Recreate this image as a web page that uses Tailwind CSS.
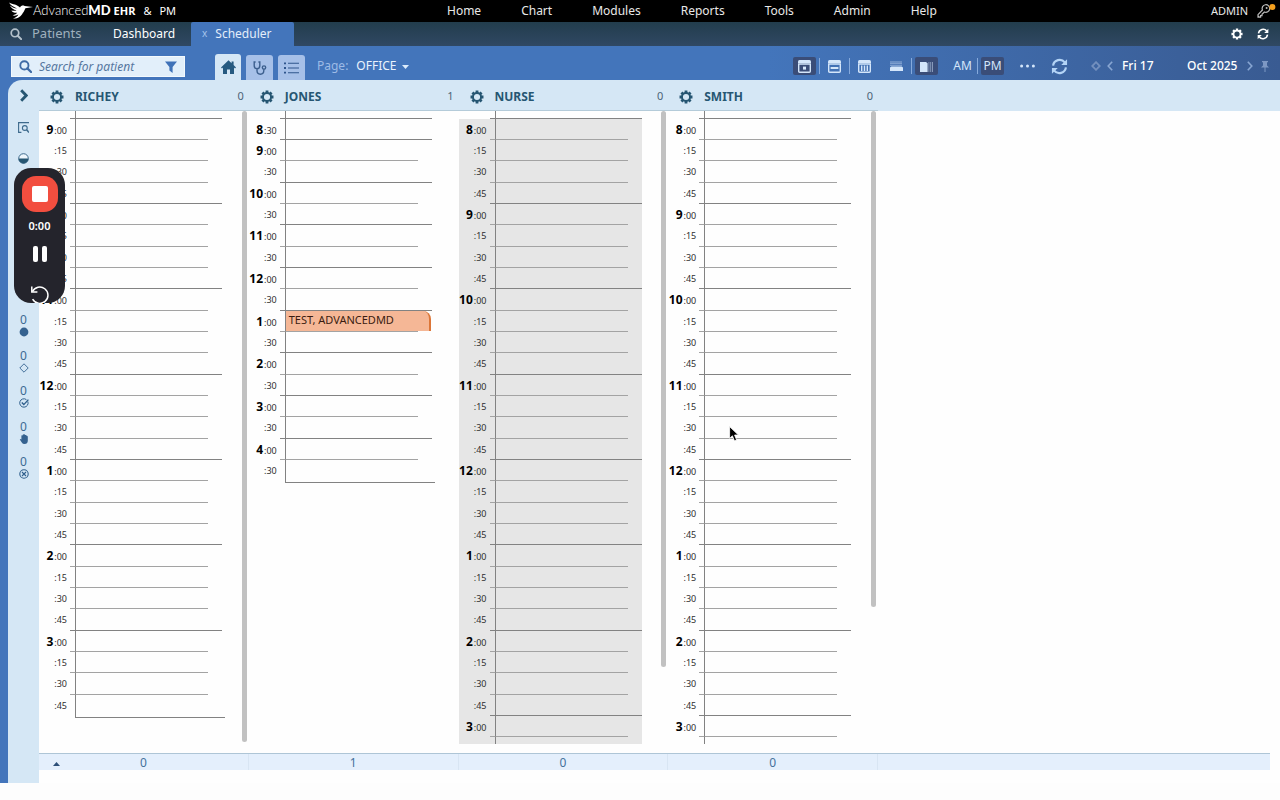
<!DOCTYPE html>
<html lang="en">
<head>
  <meta charset="UTF-8">
  <meta name="viewport" content="width=device-width, initial-scale=1.0">
  <title>Scheduler | AdvancedMD</title>
  <script src="https://cdn.jsdelivr.net/npm/@tailwindcss/browser@4"></script>
</head>
<body class="h-screen flex flex-col overflow-hidden bg-[#fdfdfd] font-['Noto_Sans','Open_Sans',sans-serif] text-xs">

  <!-- Shared icons -->
  <svg class="hidden">
    <symbol id="gear" viewBox="0 0 16 16">
      <g stroke="currentColor" stroke-width="3.2">
        <path d="M8 0.6V3.4M8 12.6v2.8M0.6 8h2.8M12.6 8h2.8M2.8 2.8l2 2M11.2 11.2l2 2M13.2 2.8l-2 2M4.8 11.2l-2 2"/>
      </g>
      <circle cx="8" cy="8" r="4.6" fill="none" stroke="currentColor" stroke-width="2.2"/>
    </symbol>
    <symbol id="refresh" viewBox="0 0 18 18">
      <path d="M2.2 8A7 7 0 0 1 14.6 4.6M15.8 10A7 7 0 0 1 3.4 13.4" fill="none" stroke="currentColor" stroke-width="2.3"/>
      <path d="M17 1.2V7.4H10.8ZM1 16.8V10.6H7.2Z" fill="currentColor"/>
    </symbol>
    <symbol id="search" viewBox="0 0 14 14">
      <circle cx="5.8" cy="5.8" r="4.4" fill="none" stroke="currentColor" stroke-width="2"/>
      <path d="M9 9l4 4" stroke="currentColor" stroke-width="2.4" stroke-linecap="round"/>
    </symbol>
  </svg>

  <!-- Top menu -->
  <header class="relative h-[22px] shrink-0 bg-black text-[#e8e8e8] flex items-center">
    <div class="w-[447px] flex items-center pl-[9px] text-white">
      <svg class="w-6 h-[17px]" viewBox="0 0 24 17" fill="#fff">
        <path d="M0 0.5C4 2.6 8 2.2 11 5.6C12 3.6 14 3.2 15.6 4L24 5L16.4 6.2C15.6 8 15 9.4 13.8 11C12 14.4 9 16.8 4 16.6C7 15.6 8.6 14.4 9.4 12.6C7.6 13.8 5 14 3.6 13.2C6 12.8 7.6 12 8.2 10.8C5.6 11 3 9.8 2.4 8.4C4.6 9 6.4 9 7.6 8.4C4.6 7.6 1.6 5.6 1 3.4C3.2 5.4 5.8 6.2 8 6.4C5 4.8 1.4 3.6 0 0.5Z"/>
      </svg>
      <span class="font-['Lato','Open_Sans',sans-serif] text-[13px]"><span class="font-light">Advanced</span><span class="font-black">MD</span></span>
      <span class="ml-[3px] text-[11px] font-bold">EHR</span>
      <span class="ml-2 text-[11px]">&amp;</span>
      <span class="ml-2 text-[11px]">PM</span>
    </div>
    <nav class="flex gap-10">
      <a href="#">Home</a>
      <a href="#">Chart</a>
      <a href="#">Modules</a>
      <a href="#">Reports</a>
      <a href="#">Tools</a>
      <a href="#">Admin</a>
      <a href="#">Help</a>
    </nav>
    <div class="ml-auto pr-1 flex items-center gap-2">
      <span class="text-[11px]">ADMIN</span>
      <svg class="w-5 h-4" viewBox="0 0 20 16" fill="none">
        <path d="M3 13.6L2 12.6V14.2H4.6V12.6H6V11.2L8.4 9A3.8 3.8 0 1 0 6.4 7L1.8 11.8" stroke="#bbb" stroke-width="1.2"/>
        <circle cx="10.6" cy="5" r="1" fill="#bbb"/>
        <circle cx="16.4" cy="4" r="3" fill="#f5a01e"/>
      </svg>
    </div>
  </header>

  <!-- Tabs -->
  <div class="h-6 shrink-0 bg-linear-to-b from-[#223d4d] to-[#304863] flex items-stretch">
    <a href="#" class="w-[113px] pl-[10px] flex items-center gap-[10px] text-[#9fb0be] text-[13px]">
      <svg class="w-3 h-3 text-[#b4c1cb]"><use href="#search"/></svg>Patients
    </a>
    <a href="#" class="w-[78px] flex items-center text-white">Dashboard</a>
    <a href="#" class="px-[11px] w-[103px] flex items-center gap-2 bg-[#4375bb] text-[#e4eefa] rounded-t-xs">
      <span class="text-[10px] text-[#a5c4ec]">x</span>Scheduler
    </a>
    <div class="ml-auto pr-[11px] flex items-center gap-[14px] text-white">
      <button type="button" aria-label="Settings"><svg class="block w-3 h-3"><use href="#gear"/></svg></button>
      <button type="button" aria-label="Reload"><svg class="block w-3 h-3"><use href="#refresh"/></svg></button>
    </div>
  </div>

  <div class="flex-1 min-h-0 mb-[17px] flex flex-col bg-linear-to-r from-[#4375bb] from-60% to-[#395b92] pl-2">

    <!-- Toolbar -->
    <div class="h-[34px] shrink-0 flex items-end">
      <div class="ml-[3px] mb-[3px] w-[174px] h-[21px] px-[7px] flex items-center gap-[7px] bg-[#e2effa] border border-white/60">
        <svg class="w-[13px] h-[13px] shrink-0 text-[#3f6aa5]"><use href="#search"/></svg>
        <input type="text" aria-label="Search for patient" placeholder="Search for patient" class="min-w-0 flex-1 italic outline-none placeholder:text-[#56779f]">
        <svg class="w-3 h-3 shrink-0" viewBox="0 0 12 12" fill="#3f72b8"><path d="M0 0.5H12L7.6 6V12L4.4 9.6V6Z"/></svg>
      </div>
      <div class="ml-[30px] flex items-end gap-[5px]">
        <button type="button" aria-label="Home page" class="w-[26px] h-[26px] rounded-t-[3px] bg-[#d5e7f5] flex items-center justify-center">
          <svg class="w-[15px] h-[14px]" viewBox="0 0 15 14" fill="#265a80"><path d="M7.5 0.3L10.6 3.2V1.4H12.6V5.1L15 7.4L14 8.4L13 7.6V14H9V9.4H6V14H2V7.6L1 8.4L0 7.4Z"/></svg>
        </button>
        <button type="button" aria-label="Clinical" class="w-[27px] h-[25px] rounded-t-[3px] bg-[#a6c0e8] flex items-center justify-center">
          <svg class="w-[14px] h-[14px]" viewBox="0 0 14 14" fill="none" stroke="#3c5f8e" stroke-width="1.4"><path d="M2.6 1H1.2V4.4C1.2 6.6 2.4 7.6 4 7.6S6.8 6.6 6.8 4.4V1H5.4M4 7.6V9.6C4 12 5.2 13.2 7.4 13.2S10.8 12 10.8 9.6V8.6"/><circle cx="11" cy="6.6" r="1.7"/></svg>
        </button>
        <button type="button" aria-label="List" class="w-[27px] h-[25px] rounded-t-[3px] bg-[#a6c0e8] flex items-center justify-center">
          <svg class="w-[15px] h-3" viewBox="0 0 15 12" fill="#2f558c"><path d="M0 0.4H2V2.2H0ZM0 5.1H2V6.9H0ZM0 9.8H2V11.6H0ZM4 0.8H15V1.8H4ZM4 5.5H15V6.5H4ZM4 10.2H15V11.2H4Z"/></svg>
        </button>
      </div>
      <div class="ml-3 h-7 flex items-center gap-2">
        <label for="page" class="text-[#9dbbe6]">Page:</label>
        <div class="relative">
          <select id="page" class="appearance-none w-[54px] text-[#eaf3fd] outline-none"><option>OFFICE</option></select>
          <svg class="absolute right-px top-[7px] w-[7px] h-1 pointer-events-none" viewBox="0 0 7 4" fill="#dcebfb"><path d="M0 0H7L3.5 4Z"/></svg>
        </div>
      </div>

      <div class="ml-auto pr-[11px] h-7 flex items-center text-[#d4e6fa]">
        <button type="button" aria-label="Day view" class="w-[23px] h-[18px] rounded-xs bg-[#3a4d78] flex items-center justify-center">
          <svg class="w-[13px] h-[13px]" viewBox="0 0 13 13"><path d="M1.5 0H11.5Q13 0 13 1.5V3H0V1.5Q0 0 1.5 0Z" fill="currentColor"/><path d="M0.7 4H12.3V11.3Q12.3 12.3 11.3 12.3H1.7Q0.7 12.3 0.7 11.3Z" fill="none" stroke="currentColor" stroke-width="1.4"/><path d="M5 6.6H8V9.6H5Z" fill="currentColor"/></svg>
        </button>
        <span class="mx-[3px] w-px h-4 bg-[#86aadc]"></span>
        <button type="button" aria-label="Week view" class="w-[23px] h-[18px] flex items-center justify-center">
          <svg class="w-[13px] h-[13px]" viewBox="0 0 13 13"><path d="M1.5 0H11.5Q13 0 13 1.5V3H0V1.5Q0 0 1.5 0Z" fill="currentColor"/><path d="M0.7 4H12.3V11.3Q12.3 12.3 11.3 12.3H1.7Q0.7 12.3 0.7 11.3Z" fill="none" stroke="currentColor" stroke-width="1.4"/><path d="M2.6 7H10.4V9H2.6Z" fill="currentColor"/></svg>
        </button>
        <span class="mx-[3px] w-px h-4 bg-[#86aadc]"></span>
        <button type="button" aria-label="Month view" class="w-[23px] h-[18px] flex items-center justify-center">
          <svg class="w-[13px] h-[13px]" viewBox="0 0 13 13"><path d="M1.5 0H11.5Q13 0 13 1.5V3H0V1.5Q0 0 1.5 0Z" fill="currentColor"/><path d="M0.7 4H12.3V11.3Q12.3 12.3 11.3 12.3H1.7Q0.7 12.3 0.7 11.3Z" fill="none" stroke="currentColor" stroke-width="1.4"/><path d="M3 5.4H4.4V11H3ZM5.8 5.4H7.2V11H5.8ZM8.6 5.4H10V11H8.6Z" fill="currentColor"/></svg>
        </button>
        <button type="button" aria-label="Stacked rows" class="ml-[9px] w-[23px] h-[18px] flex items-center justify-center">
          <svg class="w-[13px] h-[11px]" viewBox="0 0 13 11" fill="currentColor"><path d="M0 6.4L1.4 5.6H11.6L13 6.4V10H0Z"/><path d="M0 0.5H12V1.5H0ZM0 2.2H12V3.2H0ZM0 4H12V4.8H0Z" opacity="0.55"/></svg>
        </button>
        <span class="mx-[3px] w-px h-4 bg-[#86aadc]"></span>
        <button type="button" aria-label="Side by side" class="w-[23px] h-[18px] rounded-xs bg-[#3a4d78] flex items-center justify-center">
          <svg class="w-[13px] h-[11px]" viewBox="0 0 13 11" fill="currentColor"><path d="M0 1H6L7.6 2.2V11H0Z"/><path d="M8.4 1H9.4V11H8.4ZM10.2 1H11.2V11H10.2ZM12 1H13V11H12Z" opacity="0.5"/></svg>
        </button>
        <button type="button" class="ml-[13px] w-[23px] h-[18px]">AM</button>
        <span class="mx-[3px] w-px h-4 bg-[#86aadc]"></span>
        <button type="button" class="w-[23px] h-[18px] rounded-xs bg-[#3a4d78]">PM</button>
        <button type="button" aria-label="More" class="ml-4">
          <svg class="block w-[15px] h-1" viewBox="0 0 15 4" fill="currentColor"><circle cx="1.6" cy="2" r="1.5"/><circle cx="7.5" cy="2" r="1.5"/><circle cx="13.4" cy="2" r="1.5"/></svg>
        </button>
        <button type="button" aria-label="Refresh schedule" class="ml-4"><svg class="block w-[17px] h-[17px] text-[#b4d4f6]"><use href="#refresh"/></svg></button>
        <button type="button" aria-label="Today" class="ml-[23px]">
          <svg class="block w-[10px] h-[10px]" viewBox="0 0 10 10" fill="none" stroke="#7390be" stroke-width="1.8"><path d="M5 1.2L8.8 5L5 8.8L1.2 5Z"/></svg>
        </button>
        <button type="button" aria-label="Previous day" class="ml-[6px]">
          <svg class="block w-[6px] h-[10px]" viewBox="0 0 6 10" fill="none" stroke="#88a6d2" stroke-width="1.6"><path d="M5.2 0.8L1.2 5L5.2 9.2"/></svg>
        </button>
        <span class="ml-[9px] w-[65px] font-medium text-white">Fri 17</span>
        <span class="w-[60px] font-medium text-white">Oct 2025</span>
        <button type="button" aria-label="Next day">
          <svg class="block w-[6px] h-[10px]" viewBox="0 0 6 10" fill="none" stroke="#88a6d2" stroke-width="1.6"><path d="M0.8 0.8L4.8 5L0.8 9.2"/></svg>
        </button>
        <button type="button" aria-label="Pin" class="ml-2">
          <svg class="block w-2 h-[11px]" viewBox="0 0 8 11" fill="#7d98c4"><path d="M1 0H7V1.2H6V4.4L8 6.6H4.5V11H3.5V6.6H0L2 4.4V1.2H1Z"/></svg>
        </button>
      </div>
    </div>

    <!-- Panel -->
    <div class="flex-1 min-h-0 flex rounded-tl-[14px] overflow-hidden bg-[#d5e7f5]">

      <!-- Status strip -->
      <aside class="w-[31px] shrink-0 flex flex-col items-center pt-[9px] text-[#3d6a93]">
        <button type="button" aria-label="Expand"><svg class="block w-2 h-[13px]" viewBox="0 0 8 13" fill="none" stroke="#265672" stroke-width="2.8"><path d="M1.2 1.2L6.2 6.5L1.2 11.8"/></svg></button>
        <svg class="mt-5 w-[11px] h-[11px]" viewBox="0 0 11 11" fill="none" stroke="#3d6a8c" stroke-width="1.1"><path d="M0 0.6H11M0.6 0.6V10.4H3.4"/><circle cx="6.8" cy="6" r="2.4"/><path d="M8.6 7.8L11 10.4" stroke-width="1.5"/></svg>
        <svg class="mt-5 w-[11px] h-[11px]" viewBox="0 0 11 11"><circle cx="5.5" cy="5.5" r="4.8" fill="#eef6fc" stroke="#3d6a8c"/><path d="M0.6 5.5H10.4A4.9 4.9 0 0 1 0.6 5.5Z" fill="#265672"/></svg>
        <ul class="mt-[149px] h-[166px] flex flex-col justify-between">
          <li class="h-6 flex flex-col items-center leading-[14px]">
            <span>0</span><svg class="w-[10px] h-[10px]" viewBox="0 0 10 10"><circle cx="5" cy="5" r="4.4" fill="#35628f"/></svg>
          </li>
          <li class="h-6 flex flex-col items-center leading-[14px]">
            <span>0</span><svg class="w-[10px] h-[10px]" viewBox="0 0 10 10"><path d="M5 0.8L9.2 5L5 9.2L0.8 5Z" fill="none" stroke="#45719b"/></svg>
          </li>
          <li class="h-6 flex flex-col items-center leading-[14px]">
            <span>0</span><svg class="w-[10px] h-[10px]" viewBox="0 0 10 10" fill="none" stroke="#2f5f8c"><path d="M8.8 3.4A4.2 4.2 0 1 1 7.4 1.6"/><path d="M2.8 4.6L4.8 6.6L9.4 1.6" stroke-width="1.4"/></svg>
          </li>
          <li class="h-6 flex flex-col items-center leading-[14px]">
            <span>0</span><svg class="w-[10px] h-[10px]" viewBox="0 0 10 10" fill="#35628f"><path d="M2.4 1.6Q3 0.8 3.6 1.4Q3.8 0.2 4.8 0.4Q5.8 0 6.2 1Q7.4 0.6 7.6 1.8Q8.8 1.6 8.8 3V7Q8.6 10 5.6 10Q3.6 10 2.8 8.4L0.8 5.6Q1 4.6 2.4 5.4Z"/></svg>
          </li>
          <li class="h-6 flex flex-col items-center leading-[14px]">
            <span>0</span><svg class="w-[10px] h-[10px]" viewBox="0 0 10 10" fill="none" stroke="#2f5f8c" stroke-width="1.1"><circle cx="5" cy="5" r="4.2"/><path d="M3 3L7 7M7 3L3 7"/></svg>
          </li>
        </ul>
      </aside>

      <main class="flex-1 min-w-0 flex flex-col bg-[#fefefe]">
        <div class="h-[31px] shrink-0 bg-[#d5e7f5]">
          <div id="heads" class="w-[839px] h-full grid grid-cols-4 border-b border-[#b4cbd9]"></div>
        </div>
        <div id="columns" class="w-[839px] flex-1 min-h-0 mb-[9px] grid grid-cols-4 overflow-hidden"></div>
        <footer class="mr-[10px] mb-[13px] h-[17px] shrink-0 relative bg-[#e4effc] border-t border-[#aec5d6] text-[#45719b]">
          <button type="button" aria-label="Show totals" class="absolute left-[14px] top-2"><svg class="block w-[7px] h-1" viewBox="0 0 7 4" fill="#2c4f78"><path d="M0 4L3.5 0L7 4Z"/></svg></button>
          <div id="totals" class="w-[839px] grid grid-cols-4 text-center"></div>
        </footer>
      </main>
    </div>
  </div>

  <!-- Recorder widget, floats over the page -->
  <div class="absolute left-[14px] top-[168px] w-[51px] h-[135px] rounded-[17px] overflow-hidden bg-[#24242c] flex flex-col items-center pt-2 text-white">
    <button type="button" aria-label="Stop" class="w-9 h-9 shrink-0 rounded-[14px] bg-[#f24e3f] flex items-center justify-center"><span class="w-4 h-4 rounded-xs bg-white"></span></button>
    <span class="mt-[6px] text-[11px] leading-4 font-semibold">0:00</span>
    <button type="button" aria-label="Pause" class="mt-3 shrink-0 flex gap-1"><span class="w-[5px] h-4 rounded-xs bg-white"></span><span class="w-[5px] h-4 rounded-xs bg-white"></span></button>
    <button type="button" aria-label="Restart" class="mt-[23px] shrink-0">
      <svg class="block w-5 h-5" viewBox="0 0 20 20" fill="none" stroke="#fff" stroke-width="1.5"><path d="M2.4 6.6A8.2 8.2 0 1 1 2.6 14.2"/><path d="M1.8 1.6V7H7.4"/></svg>
    </button>
  </div>

  <!-- Pointer -->
  <svg class="absolute left-[729px] top-[426px] w-3 h-4" viewBox="0 0 12 16"><path d="M0.6 0.6V12.4L3.4 9.8L5.4 14.8L7.6 13.9L5.6 9H9.4Z" fill="#000" stroke="#fff" stroke-width="0.8"/></svg>

  <script>
    // step: minutes per slot, from/to: minutes since midnight, bar: scrollbar height
    // more: the day goes on below the last slot shown
    const providers = [
      { name: 'RICHEY', count: 0, step: 15, from: 540, to: 960, bar: 631 },
      { name: 'JONES', count: 1, step: 30, from: 510, to: 1020, bar: 0, appt: { at: 780, text: 'TEST, ADVANCEDMD' } },
      { name: 'NURSE', count: 0, step: 15, from: 480, to: 915, bar: 556, more: true, closed: true },
      { name: 'SMITH', count: 0, step: 15, from: 480, to: 915, bar: 496, more: true },
    ];

    function slot(p, t) {
      const min = t % 60;
      const hour = (Math.floor(t / 60) + 11) % 12 + 1;
      const last = !p.more && t + p.step >= p.to;
      const endsHour = (t + p.step) % 60 === 0;
      const height = last ? 'h-[23px]' : 'h-[21px] nth-[3n]:h-[22px]';
      const tick = last ? '' : endsHour ? 'border-b border-[#828282]' : 'border-b border-[#a3a3a3]';
      const cell = last ? 'w-[150px] border-b border-[#828282]'
        : endsHour ? 'w-[147px] border-b border-[#828282]' : 'w-[133px] border-b border-b-[#a3a3a3] border-l-[#828282]';
      const showHour = min === 0 || t === p.from;
      const appt = p.appt && p.appt.at === t
        ? `<div class="absolute inset-y-0 left-0 w-[145px] pl-[3px] rounded-tr-lg border-r-2 border-[#dc7638] bg-[#f5b796] text-[11px] leading-[18px] text-[#3a1c10] whitespace-nowrap">${p.appt.text}</div>` : '';
      return `<div class="${height} shrink-0 flex">
        <div class="w-[31px] pr-[3px] flex justify-end items-baseline text-[9px] leading-[21px] text-[#2e2e2e]">${showHour ? `<b class="mr-px text-xs leading-[21px] text-black">${hour}</b>` : ''}:${String(min).padStart(2, '0')}</div>
        <div class="w-[5px] ${tick}"></div>
        <div class="relative border-l ${cell}">${appt}</div>
      </div>`;
    }

    document.getElementById('heads').innerHTML = providers.map(p => `
      <div class="pt-[3px] pl-[11px] pr-[5px] flex items-center text-[#265672]">
        <button type="button" aria-label="${p.name} settings"><svg class="block w-[14px] h-[14px]"><use href="#gear"/></svg></button>
        <h2 class="ml-[11px] font-bold">${p.name}</h2>
        <span class="ml-auto text-[11px] text-[#4d6477]">${p.count}</span>
      </div>`).join('');

    document.getElementById('columns').innerHTML = providers.map(p => {
      let rows = '';
      for (let t = p.from; t < p.to; t += p.step) rows += slot(p, t);
      if (p.more) rows += '<div class="flex-1 ml-9 border-l border-[#828282]"></div>';
      return `<div class="relative min-h-0 flex flex-col overflow-hidden">
        <div class="h-2 shrink-0 flex pl-[31px]"><div class="w-[5px] border-b border-[#828282]"></div><div class="w-[147px] border-l border-b border-[#828282]"></div></div>
        <div class="flex-1 flex flex-col ${p.closed ? 'w-[183px] bg-[#e6e6e6]' : 'w-[186px]'}">${rows}</div>
        ${p.bar ? `<div class="absolute right-[2px] top-0 w-[5px] rounded-full bg-[#c1c1c1]" style="height:${p.bar}px"></div>` : ''}
      </div>`;
    }).join('');

    document.getElementById('totals').innerHTML = providers.map(p =>
      `<div class="border-r border-[#d8e5f3] leading-[18px] h-4">${p.count}</div>`).join('');
  </script>
</body>
</html>
